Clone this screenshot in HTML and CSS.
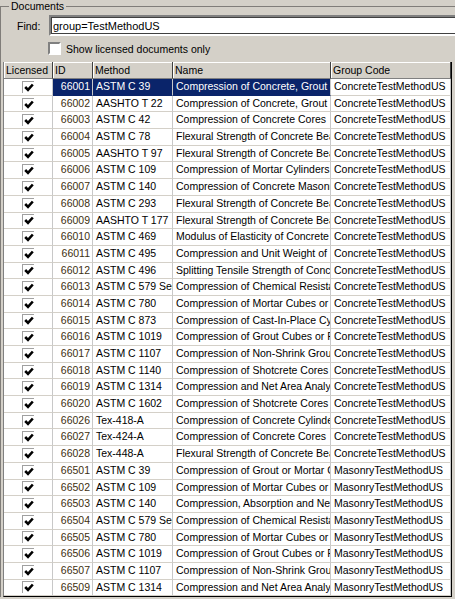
FILE: index.html
```html
<!DOCTYPE html>
<html lang="en">
<head>
  <meta charset="UTF-8" />
  <title>Documents</title>
  <link rel="stylesheet" href="styles.css">
</head>
<body>
  <fieldset class="group">
    <legend>Documents</legend>

    <div class="find-row">
      <label for="findInput">Find:</label>
      <input type="text" id="findInput" value="group=TestMethodUS" />
    </div>

    <div class="check-row">
      <span class="box"></span>
      <span>Show licensed documents only</span>
    </div>

    <div class="grid" id="docGrid">
      <div class="hd">Licensed</div>
      <div class="hd">ID</div>
      <div class="hd">Method</div>
      <div class="hd">Name</div>
      <div class="hd">Group Code</div>
    </div>
  </fieldset>

  <script>
    const docs = [
      ["66001", "ASTM C 39", "Compression of Concrete, Grout and Mortar Cylinders", "ConcreteTestMethodUS"],
      ["66002", "AASHTO T 22", "Compression of Concrete, Grout and Mortar Cylinders", "ConcreteTestMethodUS"],
      ["66003", "ASTM C 42", "Compression of Concrete Cores", "ConcreteTestMethodUS"],
      ["66004", "ASTM C 78", "Flexural Strength of Concrete Beams", "ConcreteTestMethodUS"],
      ["66005", "AASHTO T 97", "Flexural Strength of Concrete Beams", "ConcreteTestMethodUS"],
      ["66006", "ASTM C 109", "Compression of Mortar Cylinders", "ConcreteTestMethodUS"],
      ["66007", "ASTM C 140", "Compression of Concrete Masonry Units", "ConcreteTestMethodUS"],
      ["66008", "ASTM C 293", "Flexural Strength of Concrete Beams", "ConcreteTestMethodUS"],
      ["66009", "AASHTO T 177", "Flexural Strength of Concrete Beams", "ConcreteTestMethodUS"],
      ["66010", "ASTM C 469", "Modulus of Elasticity of Concrete", "ConcreteTestMethodUS"],
      ["66011", "ASTM C 495", "Compression and Unit Weight of Insulating Concrete", "ConcreteTestMethodUS"],
      ["66012", "ASTM C 496", "Splitting Tensile Strength of Concrete", "ConcreteTestMethodUS"],
      ["66013", "ASTM C 579 Sec B", "Compression of Chemical Resistant Mortars", "ConcreteTestMethodUS"],
      ["66014", "ASTM C 780", "Compression of Mortar Cubes or Cylinders", "ConcreteTestMethodUS"],
      ["66015", "ASTM C 873", "Compression of Cast-In-Place Cylinders", "ConcreteTestMethodUS"],
      ["66016", "ASTM C 1019", "Compression of Grout Cubes or Prisms", "ConcreteTestMethodUS"],
      ["66017", "ASTM C 1107", "Compression of Non-Shrink Grout", "ConcreteTestMethodUS"],
      ["66018", "ASTM C 1140", "Compression of Shotcrete Cores", "ConcreteTestMethodUS"],
      ["66019", "ASTM C 1314", "Compression and Net Area Analysis of Prisms", "ConcreteTestMethodUS"],
      ["66020", "ASTM C 1602", "Compression of Shotcrete Cores", "ConcreteTestMethodUS"],
      ["66026", "Tex-418-A", "Compression of Concrete Cylinders", "ConcreteTestMethodUS"],
      ["66027", "Tex-424-A", "Compression of Concrete Cores", "ConcreteTestMethodUS"],
      ["66028", "Tex-448-A", "Flexural Strength of Concrete Beams", "ConcreteTestMethodUS"],
      ["66501", "ASTM C 39", "Compression of Grout or Mortar Cylinders", "MasonryTestMethodUS"],
      ["66502", "ASTM C 109", "Compression of Mortar Cubes or Cylinders", "MasonryTestMethodUS"],
      ["66503", "ASTM C 140", "Compression, Absorption and Net Area", "MasonryTestMethodUS"],
      ["66504", "ASTM C 579 Sec B", "Compression of Chemical Resistant Mortars", "MasonryTestMethodUS"],
      ["66505", "ASTM C 780", "Compression of Mortar Cubes or Cylinders", "MasonryTestMethodUS"],
      ["66506", "ASTM C 1019", "Compression of Grout Cubes or Prisms", "MasonryTestMethodUS"],
      ["66507", "ASTM C 1107", "Compression of Non-Shrink Grout", "MasonryTestMethodUS"],
      ["66509", "ASTM C 1314", "Compression and Net Area Analysis of Prisms", "MasonryTestMethodUS"]
    ];

    const grid = document.getElementById("docGrid");
    const check = '<svg width="10" height="9" viewBox="0 0 10 9"><path d="M1.2 4 L4 6.8 L8.8 1.5" fill="none" stroke="#000" stroke-width="2.6"/></svg>';

    docs.forEach((d, i) => {
      const sel = i === 0 ? " sel" : "";
      grid.insertAdjacentHTML("beforeend",
        `<div class="cell lic"><span class="cb">${check}</span></div>` +
        `<div class="cell id${sel}">${d[0]}</div>` +
        `<div class="cell${sel}">${d[1]}</div>` +
        `<div class="cell${sel}">${d[2]}</div>` +
        `<div class="cell">${d[3]}</div>`);
    });
  </script>
</body>
</html>
```

FILE: styles.css
```css
body {
  margin: 0;
  background: #d4d0c8;
  font-family: "Liberation Sans", Arial, sans-serif;
  font-size: 10.5px;
  color: #000;
  overflow: hidden;
  height: 599px;
}

.group {
  margin: 0;
  padding: 0 0 0 1px;
  width: 470px;
  border: 2px groove #d4d0c8;
  border-right: none;
  border-bottom: none;
}

.group legend {
  padding: 0 2px;
  margin-left: 6px;
  line-height: 13px;
}

.find-row {
  display: flex;
  align-items: center;
  padding-top: 2px;
}

.find-row label {
  width: 44px;
  padding-left: 14px;
  box-sizing: border-box;
}

.find-row input {
  flex: 1;
  height: 21px;
  box-sizing: border-box;
  margin: 0 0 0 2px;
  padding: 0 2px;
  font: inherit;
  font-size: 11px;
  border: 2px solid;
  border-color: #808080 #ffffff #ffffff #808080;
  outline: 1px solid #404040;
  outline-offset: -3px;
  background: #fff;
}

.check-row {
  display: flex;
  align-items: center;
  gap: 5px;
  margin: 6px 0 0 45px;
  height: 13px;
}

.box {
  width: 9px;
  height: 9px;
  background: #fff;
  border: 2px solid;
  border-color: #808080 #fff #fff #808080;
}

.grid {
  display: grid;
  grid-template-columns: 49px 40px 80px 158px 120px;
  grid-template-rows: 17px;
  grid-auto-rows: 16.7px;
  width: 447px;
  margin-top: 7px;
  border-left: 1px solid #808080;
  border-right: 1px solid #000;
  border-bottom: 1px solid #000;
}

.hd {
  background: #d4d0c8;
  border-right: 1px solid #404040;
  border-bottom: 1px solid #808080;
  box-shadow: inset 1px 1px 0 #fff;
  padding-left: 2px;
  line-height: 16px;
  white-space: nowrap;
  overflow: hidden;
}

.cell {
  background: #fff;
  border-right: 1px solid #c8c8c8;
  border-bottom: 1px solid #d4d0c8;
  padding-left: 3px;
  line-height: 15.5px;
  white-space: nowrap;
  overflow: hidden;
}

.cell.id {
  text-align: right;
  padding: 0 2px 0 0;
  color: #40300f;
}

.cell.sel {
  background: #0a246a;
  color: #fff;
  border-bottom-color: #0a246a;
}

.cell.lic {
  display: flex;
  align-items: center;
  justify-content: center;
  padding: 0;
}

.cb {
  width: 12px;
  height: 12px;
  box-sizing: border-box;
  border-top: 1px solid #a0a0a0;
  border-left: 1px solid #a0a0a0;
  display: flex;
  align-items: center;
  justify-content: center;
  background: #fff;
}
```
